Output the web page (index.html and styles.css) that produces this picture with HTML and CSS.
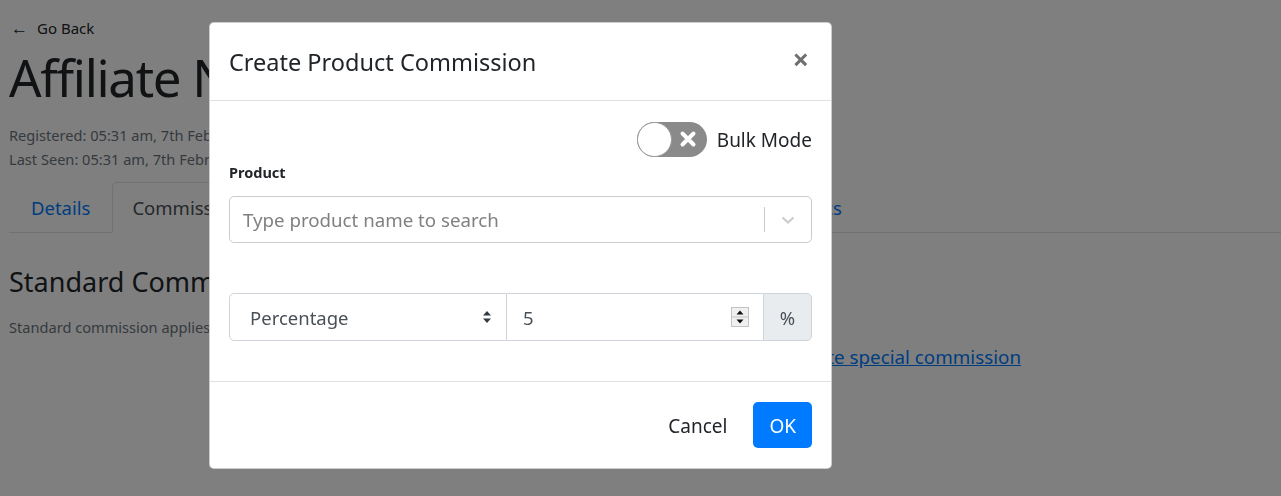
FILE: index.html
```html
<!DOCTYPE html>
<html>
<head>
<meta charset="utf-8">
<link rel="stylesheet" href="styles.css">
</head>
<body>
<div class="page">
  <a class="back"><span class="arrow">&larr;</span>Go Back</a>
  <h1 class="title">Affiliate Name</h1>
  <div class="meta first">Registered: 05:31 am, 7th February 2024</div>
  <div class="meta">Last Seen: 05:31 am, 7th February 2024</div>
  <div class="tabs-wrap">
    <ul class="tabs">
      <li class="tab">Details</li>
      <li class="tab active">Commissions</li>
      <li class="tab">Payouts</li>
      <li class="tab">Referrals</li>
      <li class="tab last">Statistics</li>
    </ul>
  </div>
  <h2 class="sub">Standard Commission</h2>
  <p class="note">Standard commission applies to all products unless a special commission is set.</p>
  <div class="special-row"><a class="special">Create special commission</a></div>
</div>

<div class="backdrop"></div>

<div class="modal">
  <div class="modal-header">
    <h5 class="modal-title">Create Product Commission</h5>
    <span class="close">&times;</span>
  </div>
  <div class="modal-body">
    <div class="toggle-row">
      <span class="switch">
        <span class="knob"></span>
        <svg class="x" width="18" height="18" viewBox="0 0 18 18"><path d="M3.5 3.5 L14.5 14.5 M14.5 3.5 L3.5 14.5" stroke="#fff" stroke-width="4" stroke-linecap="round"/></svg>
      </span>
      <span class="toggle-label">Bulk Mode</span>
    </div>
    <label class="field-label">Product</label>
    <div class="search">
      <span class="placeholder">Type product name to search</span>
      <span class="sep"></span>
      <svg class="chev" width="20" height="20" viewBox="0 0 20 20"><path d="M4.5 7.5 L10 12.5 L15.5 7.5" fill="none" stroke="#ccc" stroke-width="2.2"/></svg>
    </div>
    <div class="group">
      <div class="g-select">
        <span>Percentage</span>
        <svg width="10" height="14" viewBox="0 0 10 14"><path d="M5 1 L9 5.5 H1 Z M5 13 L9 8.5 H1 Z" fill="#343a40"/></svg>
      </div>
      <div class="g-input">
        <span>5</span>
        <span class="spin">
          <svg width="18" height="20" viewBox="0 0 18 20"><rect x="0.5" y="0.5" width="17" height="19" fill="#f0f0f0" stroke="#c4c4c4"/><line x1="1" y1="10" x2="17" y2="10" stroke="#c4c4c4"/><path d="M9 3.5 L12.5 7.5 H5.5 Z M9 16.5 L12.5 12.5 H5.5 Z" fill="#111"/></svg>
        </span>
      </div>
      <div class="g-addon">%</div>
    </div>
  </div>
  <div class="modal-footer">
    <button class="btn btn-link">Cancel</button>
    <button class="btn btn-primary">OK</button>
  </div>
</div>
</body>
</html>
```

FILE: styles.css
```css
* { box-sizing: border-box; }
html, body { margin: 0; padding: 0; }
body {
  font-family: "Noto Sans", "Open Sans", sans-serif;
  color: #212529;
  background: #fff;
  width: 1281px;
  height: 496px;
  overflow: hidden;
}
.page { padding: 13px 9px 0 9px; }
.back { display: flex; align-items: center; font-size: 15px; color: #212529; line-height: 30px; }
.arrow { font-size: 17px; width: 28px; padding-left: 2px; }
.title { font-size: 51px; font-weight: 400; margin: 2px 0 0 0; line-height: 64px; letter-spacing: -1.3px; }
.meta { font-size: 14.6px; color: #6c757d; line-height: 24px; }
.meta.first { margin-top: 14px; }
.tabs-wrap { margin-top: 11px; border-bottom: 1px solid #dee2e6; width: 1272px; }
.tabs {
  list-style: none; margin: 0 0 -1px 0; padding: 0;
  display: flex; width: 855px;
}
.tab {
  font-size: 18.5px; color: #007bff; padding: 10px 21px; line-height: 29px;
  border: 1px solid transparent; border-top-left-radius: 5px; border-top-right-radius: 5px;
}
.tab.active { color: #495057; border-color: #dee2e6 #dee2e6 #fff; background: #fff; padding: 10px 19px; }
.tab.last { margin-left: auto; }
.sub { font-size: 27px; font-weight: 400; margin: 29px 0 0 0; line-height: 40px; }
.note { font-size: 14.6px; color: #6c757d; margin: 13px 0 0 0; line-height: 24px; }
.special-row { display: flex; justify-content: flex-end; width: 1012px; margin-top: 4px; }
.special { font-size: 18.8px; color: #007bff; text-decoration: underline; line-height: 28px; }

.backdrop { position: fixed; inset: 0; background: rgba(0,0,0,0.5); }

.modal {
  position: fixed; left: 209px; top: 22px; width: 623px;
  background: #fff; border-radius: 5px; border: 1px solid rgba(0,0,0,0.2);
  display: flex; flex-direction: column;
}
.modal-header {
  display: flex; align-items: center; justify-content: space-between;
  padding: 19px; border-bottom: 1px solid #dee2e6; height: 78px;
}
.modal-title { margin: 0; font-size: 23.5px; font-weight: 400; line-height: 36px; }
.close { font-size: 29px; font-weight: 700; color: #6f6f6f; line-height: 1; margin-right: 3px; margin-top: -6px; }
.modal-body { padding: 20px 19px 40px 19px; display: flex; flex-direction: column; }
.toggle-row { display: flex; align-items: center; justify-content: flex-end; gap: 10px; height: 36px; }
.switch {
  position: relative; width: 70px; height: 35px; border-radius: 18px; background: #8a8a8a;
  display: inline-block;
}
.knob {
  position: absolute; left: 0; top: 0; width: 35px; height: 35px; border-radius: 50%;
  background: #fff; border: 1px solid #9a9a9a;
}
.x { position: absolute; left: 42px; top: 8.5px; }
.toggle-label { font-size: 19px; line-height: 28px; padding-top: 2px; }
.field-label { font-size: 14.5px; font-weight: 700; margin-top: 5px; line-height: 20px; }
.search {
  margin-top: 14px; height: 47px; border: 1px solid #ccc; border-radius: 5px;
  display: flex; align-items: center; padding-left: 13px;
}
.placeholder { flex: 1; font-size: 18.7px; color: #808080; }
.sep { width: 1px; height: 25px; background: #ccc; }
.chev { margin: 0 13px 0 13px; }
.group { display: flex; margin-top: 50px; height: 48px; }
.g-select {
  width: 278px; border: 1px solid #ced4da; border-radius: 5px 0 0 5px;
  display: flex; align-items: center; justify-content: space-between;
  padding: 0 14px 0 20px; font-size: 18.5px; color: #495057;
}
.g-input {
  flex: 1; border-top: 1px solid #ced4da; border-bottom: 1px solid #ced4da;
  display: flex; align-items: center; justify-content: space-between;
  padding: 0 14px 0 16px; font-size: 18.5px; color: #495057;
}
.spin { display: flex; }
.g-addon {
  width: 49px; background: #e9ecef; border: 1px solid #ced4da; border-radius: 0 5px 5px 0;
  display: flex; align-items: center; justify-content: center; font-size: 18.5px; color: #495057;
}
.modal-footer {
  display: flex; justify-content: flex-end; align-items: center; gap: 10px;
  padding: 20px 19px; border-top: 1px solid #dee2e6;
}
.btn { font-family: inherit; font-size: 19px; border: 1px solid transparent; border-radius: 5px; height: 46px; padding: 2px 15px 0 15px; line-height: 28px; }
.btn-link { background: transparent; color: #212529; }
.btn-primary { background: #007bff; color: #fff; }
```
